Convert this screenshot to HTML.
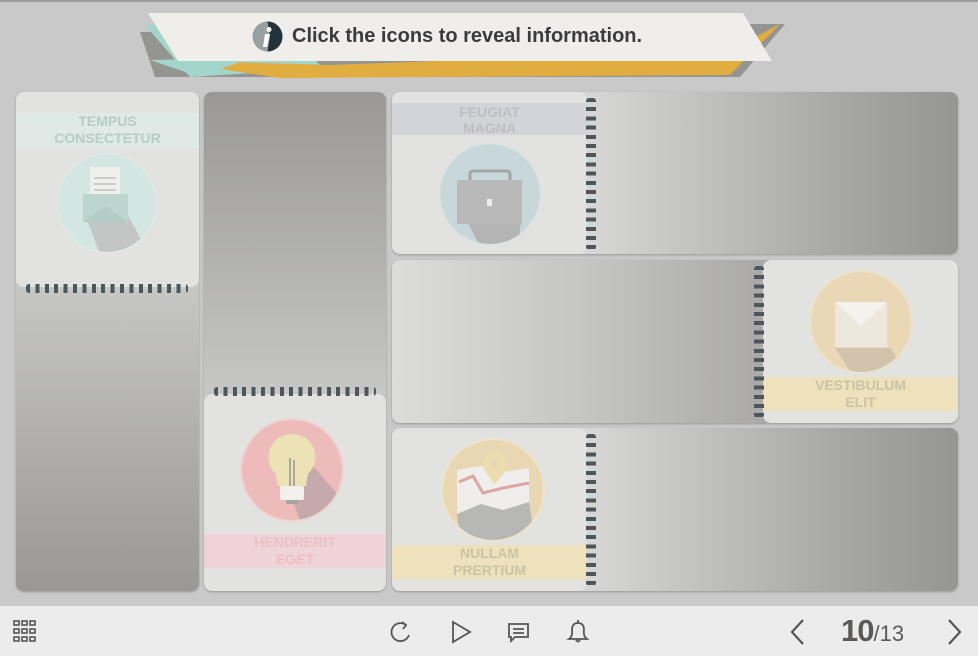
<!DOCTYPE html>
<html><head><meta charset="utf-8"><style>
*{margin:0;padding:0;box-sizing:border-box}
body{width:978px;height:656px;background:#c9c9c9;position:relative;overflow:hidden;font-family:"Liberation Sans",sans-serif}
.a{position:absolute}
.panel{position:absolute;border-radius:8px;overflow:hidden;box-shadow:0 1px 2px rgba(0,0,0,.25)}
.card{position:absolute;background:#e2e2e1;border-radius:8px}
.lbl{position:absolute;left:0;right:0;text-align:center;font-weight:bold;font-size:14px;line-height:17px;padding-top:0}
.rh{position:absolute;height:9px;background:repeating-linear-gradient(90deg,#4c575d 0 4px,transparent 4px 9.4px);border-radius:3px}
.rv{position:absolute;width:10px;background:repeating-linear-gradient(180deg,#4c575d 0 4px,transparent 4px 9.2px);border-radius:3px}
</style></head><body>
<div class="a" style="left:0;top:0;width:978px;height:2px;background:#9a9a9a"></div>
<svg class="a" style="left:130px;top:10px" width="670" height="70">
<polygon points="10,22 600,14 655,14 610,67 25,67" fill="#949490"/>
<polygon points="15,15 150,15 190,55 170,60 60,67" fill="#a3d6ca"/>
<polygon points="30,50 200,55 600,40 650,14 600,65 150,68" fill="#e1ac40"/>
<polygon points="20,50 120,48 70,67" fill="#a3d6ca"/>
<polygon points="18,3 613,3 642,51 48,51" fill="#efeeea"/>
</svg>
<svg class="a" style="left:252px;top:21px" width="31" height="31"><circle cx="15.5" cy="15.5" r="15" fill="#97a0a3"/><path d="M15.5 .5A15 15 0 0 1 15.5 30.5L18 15Z" fill="#24323c"/><path d="M13 13h5l-3 13h-4z" fill="#fff"/><circle cx="17" cy="8.5" r="2.5" fill="#fff"/></svg>
<div class="a" style="left:292px;top:25px;font-size:20px;font-weight:bold;color:#3b3b3b">Click the icons to reveal information.</div>

<div class="panel" style="left:16px;top:92px;width:183px;height:499px;background:linear-gradient(#c6c6c4 195px,#9a9896)">
 <div class="card" style="left:0;top:0;width:183px;height:195px">
  <div class="lbl" style="top:21px;height:35px;background:#dfe9e6;color:#b9cbc6">TEMPUS<br>CONSECTETUR</div>
  <svg class="a" style="left:40px;top:60px" width="102" height="102"><defs><clipPath id="c1"><circle cx="51" cy="51" r="49"/></clipPath></defs><circle cx="51" cy="51" r="50" fill="#e3ecea"/><g clip-path="url(#c1)"><circle cx="51" cy="51" r="49" fill="#d3e6e2"/><path d="M28 60 L45 105 L95 105 L70 60Z" fill="#c4c6c5"/><rect x="34" y="15" width="30" height="40" fill="#efefeb"/><rect x="38" y="25" width="22" height="2" fill="#ccc"/><rect x="38" y="31" width="22" height="2" fill="#ccc"/><rect x="38" y="37" width="22" height="2" fill="#ccc"/><path d="M27 42 L72 42 L72 70 L27 70Z" fill="#bcd5d0"/><path d="M27 70 L50 54 L72 70Z" fill="#b2ccc6"/></g></svg>
 </div>
 <div class="rh" style="left:10px;top:192px;width:162px"></div>
</div>

<div class="panel" style="left:204px;top:92px;width:182px;height:499px;background:linear-gradient(#999896,#c6c6c5 300px)">
 <div class="card" style="left:0;top:302px;width:182px;height:197px">
  <svg class="a" style="left:36px;top:24px" width="104" height="104"><defs><clipPath id="c2"><circle cx="52" cy="52" r="50"/></clipPath></defs><circle cx="52" cy="52" r="52" fill="#efd3d2"/><g clip-path="url(#c2)"><circle cx="52" cy="52" r="50" fill="#ecbbba"/><path d="M47 62 L72 47 L110 90 L85 110 L62 110Z" fill="#c6a9aa"/><path d="M52 16a23 23 0 0 1 16 40l-2 12h-28l-2-12a23 23 0 0 1 16-40z" fill="#ede1b6"/><rect x="49" y="40" width="2" height="30" fill="#a9a9a2"/><rect x="53" y="42" width="2" height="28" fill="#a9a9a2"/><rect x="40" y="68" width="24" height="14" rx="2" fill="#f1f0ed"/><rect x="46" y="82" width="12" height="4" rx="2" fill="#a3a3a3"/></g></svg>
  <div class="lbl" style="top:140px;height:34px;background:#eed3d8;color:#ecbfc1">HENDRERIT<br>EGET</div>
 </div>
 <div class="rh" style="left:10px;top:295px;width:162px"></div>
</div>

<div class="panel" style="left:392px;top:92px;width:566px;height:162px;background:linear-gradient(90deg,#d6d6d5 200px,#bdbdbb 330px,#a5a5a3 460px,#959593)">
 <div class="card" style="left:0;top:0;width:195px;height:162px">
  <div class="lbl" style="top:11px;height:32px;background:#d3d4d9;color:#bfbfc2;padding-top:1px;line-height:16px">FEUGIAT<br>MAGNA</div>
  <svg class="a" style="left:46px;top:50px" width="104" height="104"><defs><clipPath id="c3"><circle cx="52" cy="52" r="50"/></clipPath></defs><circle cx="52" cy="52" r="52" fill="#dfe3e3"/><g clip-path="url(#c3)"><circle cx="52" cy="52" r="50" fill="#c8d8da"/><path d="M20 62 L45 110 L80 110 L84 65Z" fill="#b4b4b4"/><rect x="32" y="29" width="40" height="12" rx="3" fill="none" stroke="#a5a5a5" stroke-width="3"/><rect x="19" y="38" width="65" height="44" fill="#b9b9b9"/><rect x="49" y="57" width="5" height="7" fill="#eee"/></g></svg>
 </div>
 <div class="rv" style="left:194px;top:6px;height:152px"></div>
</div>

<div class="panel" style="left:392px;top:260px;width:566px;height:163px;background:linear-gradient(90deg,#dcdcdb,#c4c4c3 200px,#aaa9a8 370px)">
 <div class="card" style="left:371px;top:0;width:195px;height:163px">
  <svg class="a" style="left:46px;top:10px" width="104" height="104"><defs><clipPath id="c4"><circle cx="52" cy="52" r="50"/></clipPath></defs><circle cx="52" cy="52" r="52" fill="#ece3cc"/><g clip-path="url(#c4)"><circle cx="52" cy="52" r="50" fill="#ead7b6"/><path d="M26 78 L50 115 L100 110 L82 78Z" fill="#d2c3ac"/><rect x="26" y="32" width="52" height="45" fill="#ece8de"/><path d="M26 32 L52 56 L78 32" fill="#f4f2ec"/></g></svg>
  <div class="lbl" style="top:117px;height:34px;background:#ede2bb;color:#cbc3a6">VESTIBULUM<br>ELIT</div>
 </div>
 <div class="rv" style="left:362px;top:6px;height:152px"></div>
</div>

<div class="panel" style="left:392px;top:428px;width:566px;height:163px;background:linear-gradient(90deg,#d6d6d5 200px,#bdbdbb 330px,#a5a5a3 460px,#959593)">
 <div class="card" style="left:0;top:0;width:195px;height:163px">
  <svg class="a" style="left:49px;top:10px" width="104" height="104"><defs><clipPath id="c5"><circle cx="52" cy="52" r="50"/></clipPath></defs><circle cx="52" cy="52" r="52" fill="#ede4cb"/><g clip-path="url(#c5)"><circle cx="52" cy="52" r="50" fill="#e9d6b3"/><path d="M16 32 L40 28 L62 34 L88 30 L88 80 L60 88 L30 84 L16 78Z" fill="#efeeec"/><path d="M18 44 L32 38 L42 55 L62 50 L88 45" fill="none" stroke="#dea6a3" stroke-width="3"/><path d="M16 76 L40 66 L62 72 L88 64 L95 110 L20 110Z" fill="#b7b7b6"/><path d="M54 14a12 12 0 0 1 12 12c0 8-12 20-12 20s-12-12-12-20a12 12 0 0 1 12-12z" fill="#eddcb0"/><circle cx="54" cy="26" r="5" fill="#e9d6b3"/></g></svg>
  <div class="lbl" style="top:117px;height:34px;background:#ede2bb;color:#cbc3a6">NULLAM<br>PRERTIUM</div>
 </div>
 <div class="rv" style="left:194px;top:6px;height:152px"></div>
</div>

<div class="a" style="left:0;top:606px;width:978px;height:50px;background:#ececec"></div>
<svg class="a" style="left:13px;top:620px" width="24" height="22" fill="none" stroke="#555" stroke-width="1.6"><rect x="1" y="1" width="5" height="4"/><rect x="9" y="1" width="5" height="4"/><rect x="17" y="1" width="5" height="4"/><rect x="1" y="9" width="5" height="4"/><rect x="9" y="9" width="5" height="4"/><rect x="17" y="9" width="5" height="4"/><rect x="1" y="17" width="5" height="4"/><rect x="9" y="17" width="5" height="4"/><rect x="17" y="17" width="5" height="4"/></svg>
<svg class="a" style="left:388px;top:619px" width="26" height="26" fill="none" stroke="#555" stroke-width="1.8"><path d="M18 6 A9 9 0 1 0 21 16"/><path d="M14 3 L18 6 L15 10"/></svg>
<svg class="a" style="left:450px;top:619px" width="24" height="26" fill="none" stroke="#555" stroke-width="1.8"><path d="M3 3 L20 13 L3 23Z"/></svg>
<svg class="a" style="left:507px;top:622px" width="24" height="22" fill="none" stroke="#555" stroke-width="1.8"><path d="M2 2h19v13H8l-4 4v-4H2z"/><path d="M6 7h11M6 11h11"/></svg>
<svg class="a" style="left:565px;top:618px" width="26" height="26" fill="none" stroke="#555" stroke-width="1.8"><path d="M4 21 Q8 18 7 12 Q7 5 13 5 Q19 5 19 12 Q18 18 22 21Z"/><path d="M13 2v3M11 22q2 3 4 0"/></svg>
<svg class="a" style="left:787px;top:618px" width="20" height="28" fill="none" stroke="#555" stroke-width="2.2"><path d="M16 2 L5 14 L16 26"/></svg>
<div class="a" style="left:841px;top:613px;color:#5c5a59;font-size:31px;font-weight:bold;letter-spacing:-1px">10<span style="font-size:22px;font-weight:normal;letter-spacing:0">/13</span></div>
<svg class="a" style="left:945px;top:618px" width="20" height="28" fill="none" stroke="#555" stroke-width="2.2"><path d="M4 2 L15 14 L4 26"/></svg>
</body></html>
